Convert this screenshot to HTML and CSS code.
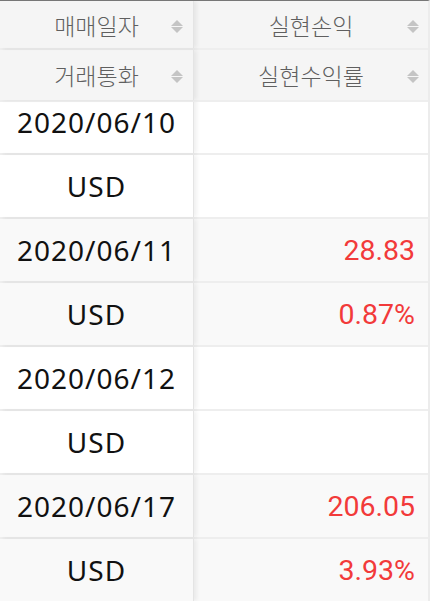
FILE: index.html
```html
<!DOCTYPE html>
<html lang="ko">
<head>
    <meta charset="UTF-8">
    <meta name="viewport" content="width=device-width, initial-scale=1.0">
    <title>매매내역</title>
    <link rel="stylesheet" href="styles.css">
</head>
<body>
    <div class="grid">
        <div class="head">
            <div class="row">
                <div class="cell fixed"><span>매매일자</span><i class="sort"></i></div>
                <div class="cell"><span>실현손익</span><i class="sort"></i></div>
            </div>
            <div class="row second">
                <div class="cell fixed"><span>거래통화</span><i class="sort"></i></div>
                <div class="cell"><span>실현수익률</span><i class="sort"></i></div>
            </div>
        </div>
        <div class="body">
            <div class="scroller">
                <div class="record">
                    <div class="row"><div class="cell fixed">2020/06/10</div><div class="cell num"></div></div>
                    <div class="row"><div class="cell fixed">USD</div><div class="cell num"></div></div>
                </div>
                <div class="record odd">
                    <div class="row"><div class="cell fixed">2020/06/11</div><div class="cell num up">28.83</div></div>
                    <div class="row"><div class="cell fixed">USD</div><div class="cell num up">0.87%</div></div>
                </div>
                <div class="record">
                    <div class="row"><div class="cell fixed">2020/06/12</div><div class="cell num"></div></div>
                    <div class="row"><div class="cell fixed">USD</div><div class="cell num"></div></div>
                </div>
                <div class="record odd">
                    <div class="row"><div class="cell fixed">2020/06/17</div><div class="cell num up">206.05</div></div>
                    <div class="row"><div class="cell fixed">USD</div><div class="cell num up">3.93%</div></div>
                </div>
            </div>
        </div>
    </div>
</body>
</html>
```

FILE: styles.css
```css
html, body {
    margin: 0;
    padding: 0;
    background: #fff;
    height: 601px;
    overflow: hidden;
}
.grid {
    width: 428px;
    border-right: 2px solid #ececec;
    border-top: 1px solid #777;
    height: 600px;
    overflow: hidden;
}
.row {
    display: flex;
    border-bottom: 2px solid #eeeeee;
}
.cell {
    flex: 1;
    display: flex;
    align-items: center;
    justify-content: center;
    position: relative;
}
.cell.fixed {
    flex: 0 0 193px;
    border-right: 1px solid #e4e4e4;
    box-shadow: 3px 0 4px rgba(0, 0, 0, 0.06);
    z-index: 1;
}
.head .row {
    background: #f5f5f5;
    height: 47px;
}
.head .row.second {
    height: 50px;
}
.head .cell {
    font-family: "Noto Sans CJK KR", "Noto Sans", sans-serif;
    font-size: 23px;
    font-weight: 300;
    color: #5f5f5f;
}
.sort {
    position: absolute;
    right: 9px;
    top: 50%;
    margin-top: -5px;
    width: 13px;
    height: 13px;
}
.sort::before, .sort::after {
    content: "";
    position: absolute;
    left: 0;
    border-left: 6px solid transparent;
    border-right: 6px solid transparent;
}
.sort::before {
    top: 0;
    border-bottom: 6px solid #c4c4c4;
}
.sort::after {
    top: 7px;
    border-top: 6px solid #c4c4c4;
}
.head .cell:not(.fixed) .sort {
    right: 8px;
}
.body {
    overflow: hidden;
}
.scroller {
    margin-top: -11px;
}
.record {
    background: #fff;
}
.record.odd {
    background: #f9f9f9;
}
.record .row {
    height: 62px;
}
.record .cell {
    font-family: "Noto Sans", sans-serif;
    font-size: 28px;
    letter-spacing: 1px;
    color: #111;
}
.record .cell.fixed {
    background: inherit;
}
.record .cell.num {
    justify-content: flex-end;
    padding-right: 13px;
    font-family: Roboto, sans-serif;
    font-size: 28.5px;
    letter-spacing: 0;
}
.up {
    color: #f23a3a !important;
}
```
